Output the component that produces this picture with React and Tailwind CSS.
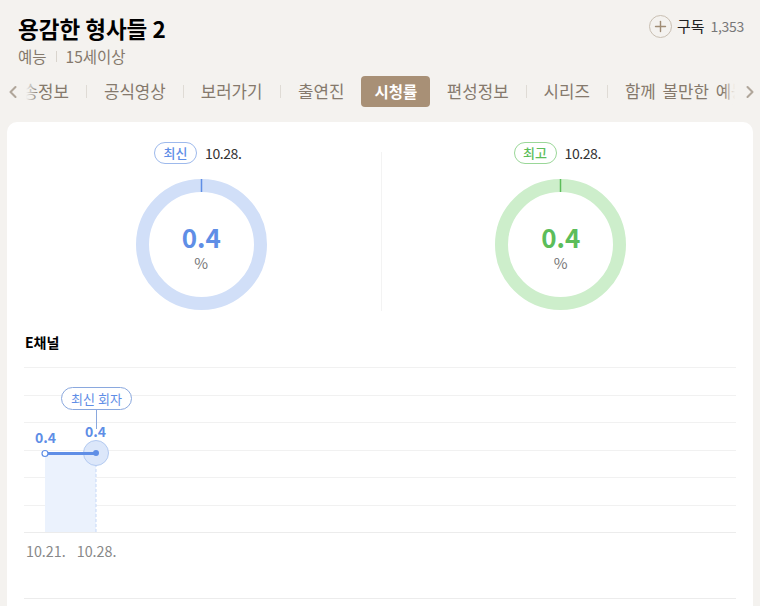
import { ChevronLeft, ChevronRight, Plus } from "lucide-react";

const tabs = ["방송정보", "공식영상", "보러가기", "출연진", "시청률", "편성정보", "시리즈", "함께 볼만한 예능"];
const gridRows = [0, 1, 2, 3, 4, 5];

function Donut({ badge, date, value, track, stroke, text, border, offset }) {
  return (
    <div className={`flex flex-1 flex-col items-center ${offset}`}>
      <div className="flex h-[22px] items-center gap-[8px] pr-[7px]">
        <span
          className={`flex h-[22px] w-[43px] items-center justify-center rounded-full border text-[13px] font-medium ${border} ${text}`}
        >
          {badge}
        </span>
        <span className="text-[14px] tracking-[-0.4px] text-[#333]">{date}</span>
      </div>
      <div className="relative mt-[15px] h-[131px] w-[131px]">
        <svg viewBox="0 0 131 131" className="h-full w-full">
          <circle cx="65.5" cy="65.5" r="59" fill="none" stroke={track} strokeWidth="13" />
          <line x1="65.5" y1="0" x2="65.5" y2="13" stroke={stroke} strokeWidth="1.5" />
        </svg>
        <div className="absolute inset-0 flex flex-col items-center justify-center pt-[4px]">
          <span className={`text-[26px] leading-[32px] font-bold ${text}`}>{value}</span>
          <span className="text-[15px] leading-[20px] text-[#777]">%</span>
        </div>
      </div>
    </div>
  );
}

export default function App() {
  return (
    <div
      className="h-[606px] w-[760px] overflow-hidden bg-[#f4f2ef]"
      style={{ fontFamily: '"Noto Sans CJK KR", "Noto Sans", sans-serif' }}
    >
      <header className="flex justify-between pt-[13px] pr-[16px] pl-[18px]">
        <div>
          <h1 className="text-[22.5px] leading-[30px] font-bold text-black">용감한 형사들 2</h1>
          <div className="mt-[3px] flex items-center text-[15.5px] leading-[20px] text-[#85796c]">
            <span>예능</span>
            <span className="mx-[9px] h-[11px] w-px bg-[#d9d4cd]" />
            <span>15세이상</span>
          </div>
        </div>
        <div className="flex h-[26px] items-center">
          <span className="flex h-[23px] w-[23px] items-center justify-center rounded-full border border-[#c9bfb2]">
            <Plus size={17} strokeWidth={2} className="text-[#a08c75]" />
          </span>
          <span className="ml-[5px] text-[15px] text-[#222]">구독</span>
          <span className="ml-[6px] text-[14px] tracking-[-0.3px] text-[#777]">1,353</span>
        </div>
      </header>

      <nav className="relative mt-[10px] flex h-[31px] items-center">
        <ChevronLeft size={20} strokeWidth={2.5} className="ml-[3px] shrink-0 text-[#b0a69a]" />
        <div className="relative ml-[3px] h-full w-[709px] overflow-hidden">
          <ul className="-ml-[35.8px] flex h-full w-max items-center text-[16.8px] text-[#85796c]">
            {tabs.map((tab, i) => {
              const active = tab === "시청률";
              const noSep = active || tabs[i + 1] === "시청률" || i === tabs.length - 1;
              return (
                <li key={tab} className="flex h-full items-center">
                  <span
                    className={
                      active
                        ? "flex h-[31px] w-[69px] items-center justify-center rounded-[4px] bg-[#a89076] text-[15.5px] font-bold text-white"
                        : tab === "출연진"
                          ? "mr-[17px] ml-[17.5px] whitespace-nowrap"
                          : tab === "편성정보"
                            ? "mr-[17px] ml-[16.5px] whitespace-nowrap"
                            : "mx-[17px] whitespace-nowrap [word-spacing:3px]"
                    }
                  >
                    {tab}
                  </span>
                  {!noSep && <span className="h-[13px] w-px bg-[#dfdbd5]" />}
                </li>
              );
            })}
          </ul>
          <div className="absolute inset-y-0 left-0 w-[12px] bg-gradient-to-r from-[#f4f2ef] to-transparent" />
          <div className="absolute inset-y-0 right-0 w-[12px] bg-gradient-to-l from-[#f4f2ef] to-transparent" />
        </div>
        <ChevronRight size={20} strokeWidth={2.5} className="ml-[5px] shrink-0 text-[#b0a69a]" />
      </nav>

      <main className="mx-[7px] mt-[15px] h-[500px] rounded-t-[10px] bg-white pt-[20px]">
        <section className="relative flex h-[181px]">
          <Donut
            badge="최신"
            date="10.28."
            value="0.4"
            track="#d1dff8"
            stroke="#5f8ee6"
            text="text-[#5f8ee6]"
            border="border-[#9db9ec]"
            offset="pl-[15px]"
          />
          <div className="mt-[10px] h-[159px] w-px bg-[#f3f3f3]" />
          <Donut
            badge="최고"
            date="10.28."
            value="0.4"
            track="#cdeecb"
            stroke="#5cbd5a"
            text="text-[#5cbd5a]"
            border="border-[#9ad798]"
            offset="pr-[13px]"
          />
        </section>

        <h2 className="mt-[9px] ml-[18px] text-[14px] leading-[20px] font-bold text-black">E채널</h2>

        <section className="relative mx-[17px] mt-[15px] h-[232px]">
          <div className="flex flex-col">
            {gridRows.map((row) => (
              <div key={row} className="h-[27.5px] border-t border-[#f1f1f1]" />
            ))}
            <div className="border-t border-[#ececec]" />
          </div>

          <svg className="absolute top-0 left-0 h-[166px] w-[100px]" viewBox="0 0 100 166">
            <rect x="21" y="87" width="51" height="78" fill="#ebf2fd" />
            <line x1="72" y1="87" x2="72" y2="165" stroke="#c5d8f7" strokeWidth="1" strokeDasharray="3 2" />
            <line x1="72.5" y1="42" x2="72.5" y2="62" stroke="#8aa8de" strokeWidth="1" />
            <circle cx="72" cy="86" r="12.5" fill="#dce7fa" stroke="#b3caf1" strokeWidth="1" />
            <line x1="21" y1="86.5" x2="72" y2="86.5" stroke="#5f8ee6" strokeWidth="3" />
            <circle cx="21" cy="86.5" r="3" fill="#fff" stroke="#5f8ee6" strokeWidth="1.2" />
            <circle cx="72" cy="86" r="3" fill="#5f8ee6" />
          </svg>

          <span className="absolute top-[20px] left-[37px] flex h-[23px] w-[71px] items-center justify-center rounded-full border border-[#8aa8de] bg-white text-[13px] text-[#5f8ee6]">
            최신 회자
          </span>
          <span className="absolute top-[61px] left-[11px] text-[14px] leading-[18px] font-bold text-[#5f8ee6]">0.4</span>
          <span className="absolute top-[55px] left-[61px] text-[14px] leading-[18px] font-bold text-[#5f8ee6]">0.4</span>

          <div className="absolute top-[175px] left-[2px] flex gap-[11px] text-[14.3px] leading-[18px] text-[#888]">
            <span>10.21.</span>
            <span>10.28.</span>
          </div>
          <div className="absolute top-[231px] right-0 left-0 border-t border-[#ececec]" />
        </section>
      </main>
    </div>
  );
}
